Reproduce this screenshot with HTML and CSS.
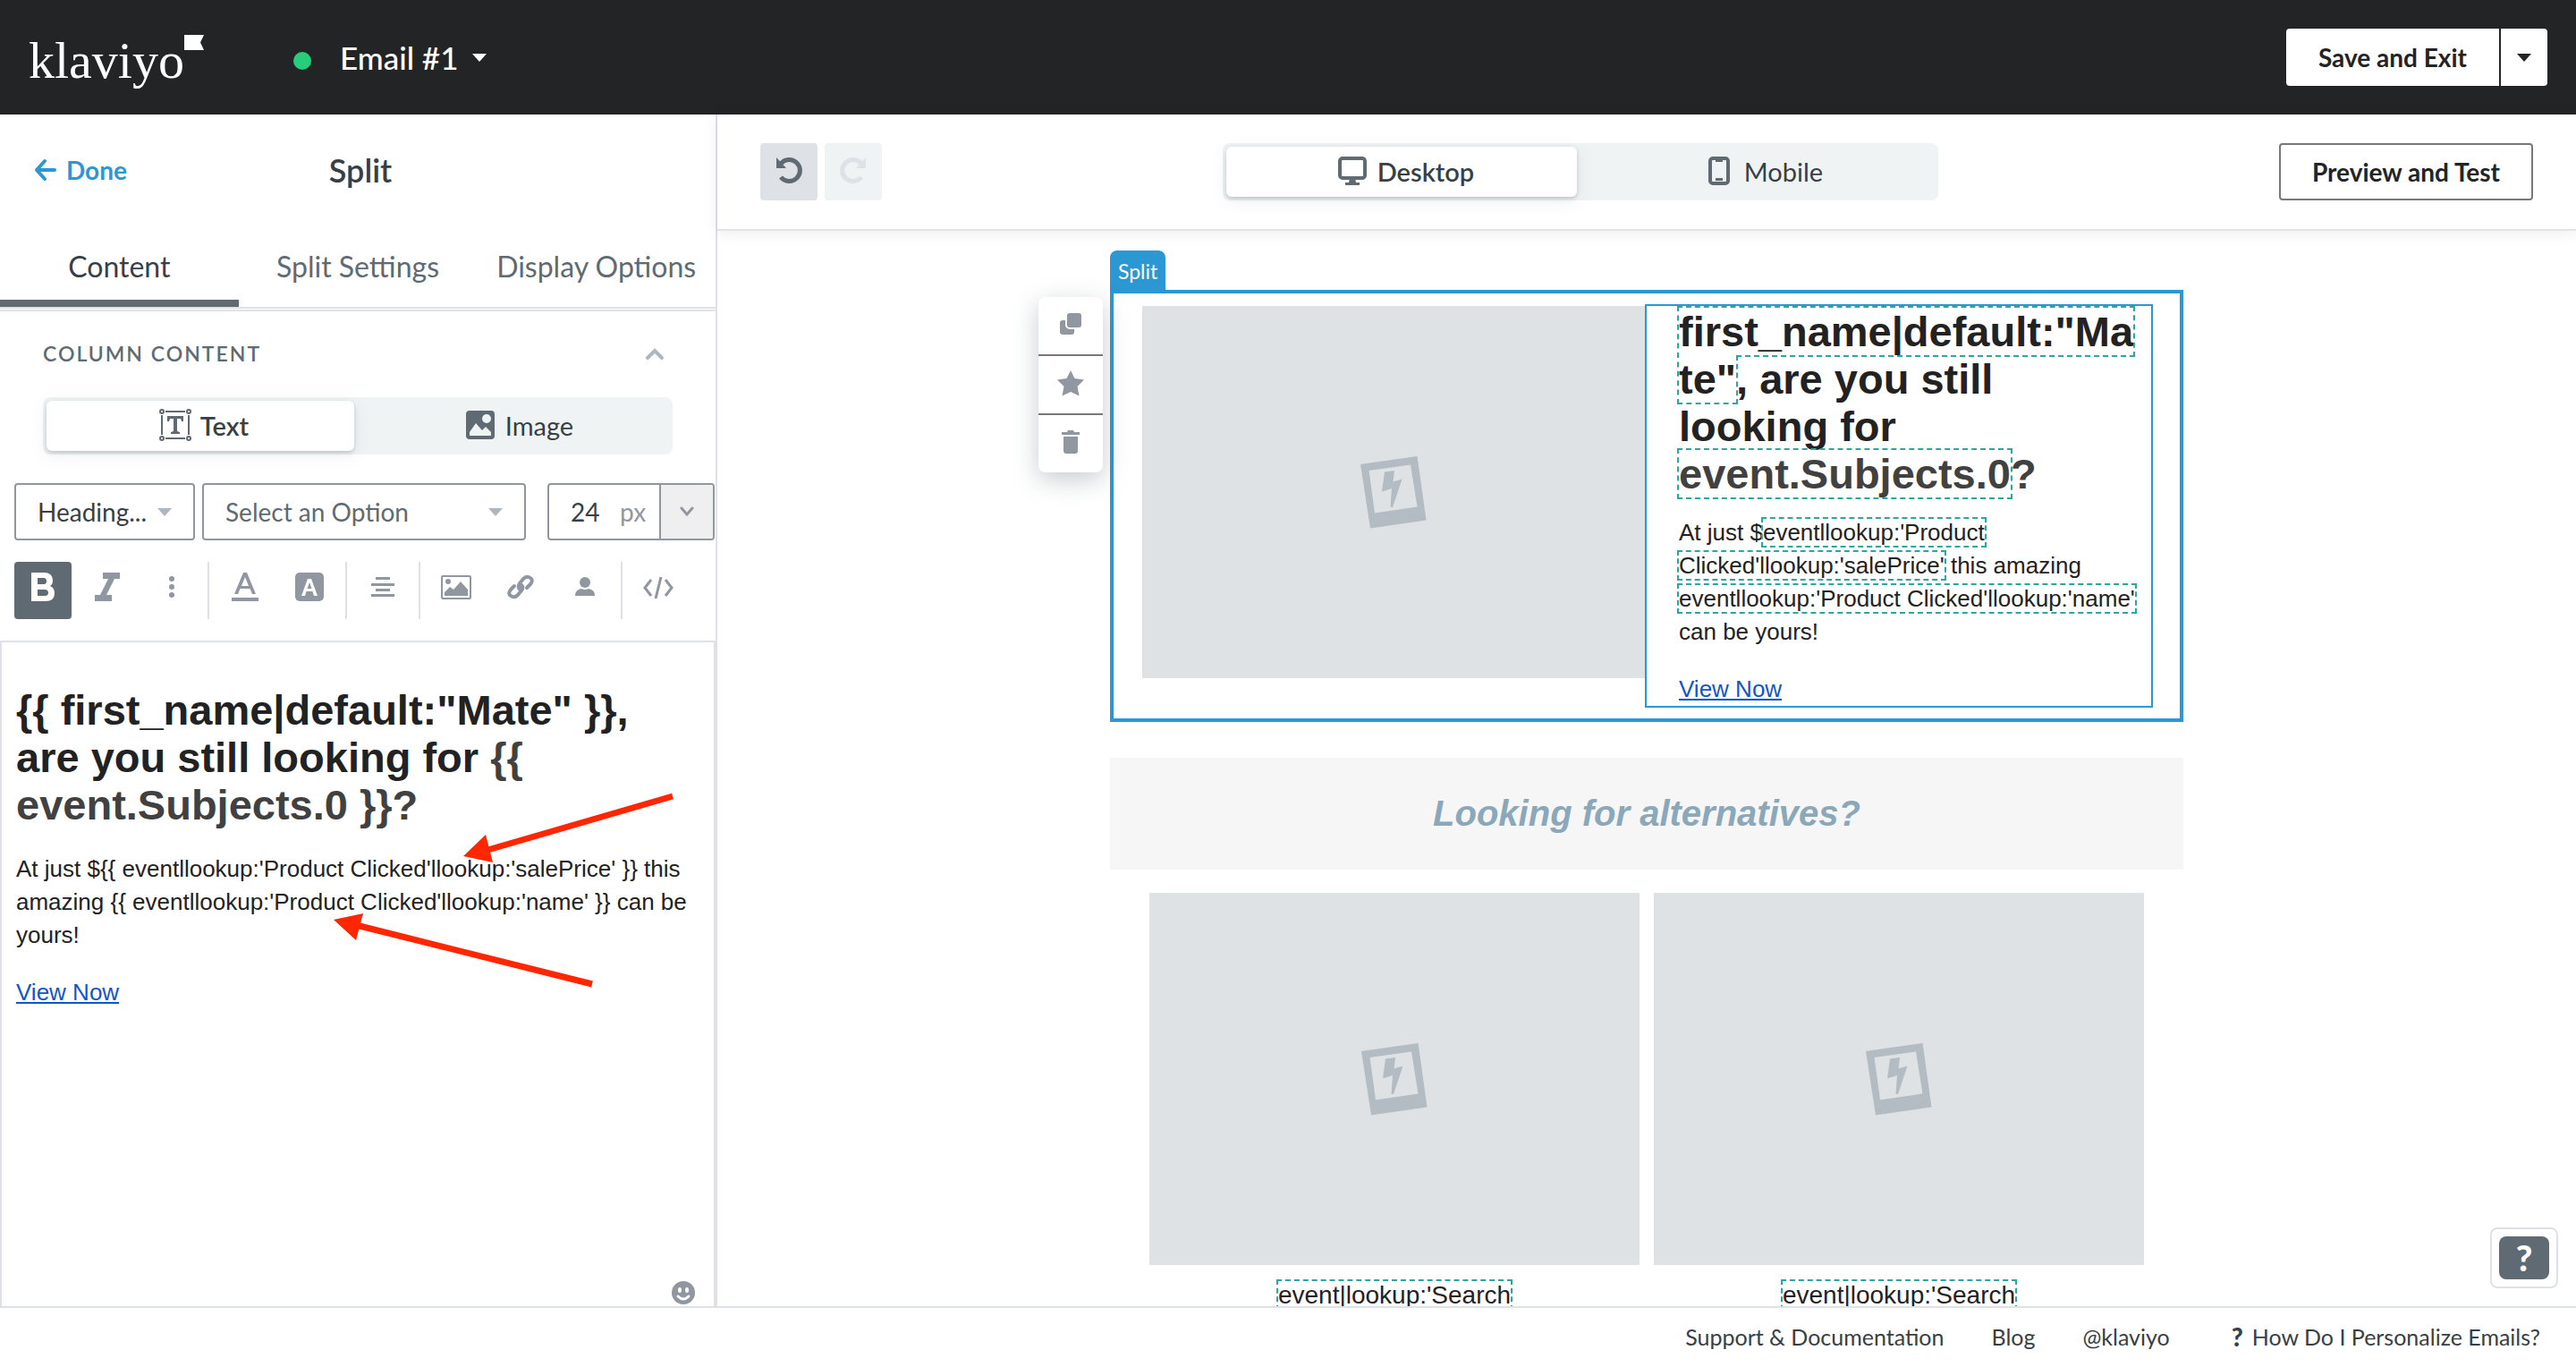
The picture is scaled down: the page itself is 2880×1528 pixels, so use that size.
FILE: index.html
```html
<!DOCTYPE html>
<html lang="en">
<head>
  <meta charset="UTF-8">
  <meta name="viewport" content="width=device-width, initial-scale=1.0">
  <title>Email #1 - Klaviyo</title>
  <link rel="stylesheet" href="styles.css">
</head>
<body>
  <!-- Shared icon used by every empty image -->
  <svg class="defs" aria-hidden="true">
    <symbol id="photo" viewBox="0 0 78 84">
      <path fill-rule="evenodd" d="M2 11 65.500 2 75.500 73.500 13 82.500ZM11.500 18 18 65.500 65.500 58.500 58 11.500Z"/>
      <path d="M29 19.500 40 18 38.500 30.500 48.500 27.500 38 59H35.500L37 38 26 41.500Z"/>
    </symbol>
  </svg>

  <header class="topbar">
    <a href="#" class="logo">klaviyo<svg width="22" height="17" viewBox="0 0 22 17"><path d="M0 0H22L18 8.500 22 17H0Z" fill="#fff"/></svg></a>
    <span class="status-dot"></span>
    <button class="email-name">Email #1 <span class="caret"></span></button>
    <div class="save-group">
      <button class="save-btn">Save and Exit</button>
      <button class="save-more" aria-label="More save options"><span class="caret"></span></button>
    </div>
  </header>

  <main class="workspace">
    <aside class="sidebar">
      <div class="sidebar-header">
        <a href="#" class="done-link">
          <svg width="26" height="26" viewBox="0 0 26 26"><path d="M12 3 3 13 12 23M4 13H23" fill="none" stroke="currentColor" stroke-width="4" stroke-linecap="round" stroke-linejoin="round"/></svg>
          Done
        </a>
        <h1>Split</h1>
      </div>

      <nav class="tabs">
        <a href="#" class="tab active">Content</a>
        <a href="#" class="tab">Split Settings</a>
        <a href="#" class="tab">Display Options</a>
      </nav>

      <section class="section">
        <div class="section-head">
          <h2>Column Content</h2>
          <button class="collapse" aria-label="Collapse">
            <svg width="24" height="16" viewBox="0 0 24 16"><path d="M4 13 12 5 20 13" fill="none" stroke="currentColor" stroke-width="4" stroke-linecap="round"/></svg>
          </button>
        </div>

        <div class="segment sidebar-segment">
          <button class="segment-btn active">
            <svg width="40" height="40" viewBox="0 0 40 40" fill="none" stroke="currentColor" stroke-width="2">
              <path d="M9 5H31M9 35H31M5 9V31M35 9V31"/>
              <circle cx="5" cy="5" r="2"/><circle cx="35" cy="5" r="2"/><circle cx="5" cy="35" r="2"/><circle cx="35" cy="35" r="2"/>
              <path d="M11 10H29V16H27L26 13H22V27L25 28V30H15V28L18 27V13H14L13 16H11Z" fill="currentColor" stroke="none"/>
            </svg>
            Text
          </button>
          <button class="segment-btn">
            <svg width="40" height="40" viewBox="0 0 40 40">
              <rect x="4" y="4" width="32" height="32" rx="4" fill="currentColor"/>
              <circle cx="27" cy="13" r="5" fill="#eff3f4"/>
              <path d="M8 32V28L15 18 22 26 26 22 32 28V32Z" fill="#eff3f4"/>
            </svg>
            Image
          </button>
        </div>

        <div class="type-row">
          <label class="select-wrap style-select">
            <select aria-label="Text style"><option>Heading...</option></select>
          </label>
          <label class="select-wrap font-select">
            <select aria-label="Font"><option>Select an Option</option></select>
          </label>
          <div class="size-field">
            <input type="text" id="fontSize" value="24" aria-label="Font size">
            <label for="fontSize">px</label>
            <button aria-label="Pick a size">
              <svg width="20" height="16" viewBox="0 0 20 16"><path d="M4 4 10 11 16 4" fill="none" stroke="currentColor" stroke-width="3" stroke-linecap="round"/></svg>
            </button>
          </div>
        </div>

        <div class="toolbar">
          <button class="tool active" aria-label="Bold">
            <svg width="40" height="40" viewBox="0 0 40 40"><path fill="#fff" fill-rule="evenodd" d="M7 4H21Q31 4 31 13Q31 17 28 19Q33 21 33 27Q33 36 23 36H7ZM14 10V17H21Q24 17 24 13.500Q24 10 21 10ZM14 23V30H22Q26 30 26 26.500Q26 23 22 23Z"/></svg>
          </button>
          <button class="tool" aria-label="Italic">
            <svg width="40" height="40" viewBox="0 0 40 40"><path d="M15 4H34V11H28L19 29H25V36H6V29H12L21 11H15Z"/></svg>
          </button>
          <button class="tool" aria-label="More">
            <svg width="40" height="40" viewBox="0 0 40 40"><circle cx="20" cy="11" r="3"/><circle cx="20" cy="20" r="3"/><circle cx="20" cy="29" r="3"/></svg>
          </button>
          <span class="divider"></span>
          <button class="tool" aria-label="Text color">
            <svg width="40" height="40" viewBox="0 0 40 40"><path fill-rule="evenodd" d="M18 4H22L32 28H28L25.500 22H14.500L12 28H8ZM20 9 16 19H24ZM5 32H35V36H5Z"/></svg>
          </button>
          <button class="tool" aria-label="Background color">
            <svg width="40" height="40" viewBox="0 0 40 40"><rect x="4" y="4" width="32" height="32" rx="5"/><path fill="#fff" fill-rule="evenodd" d="M18 11H22L29 30H25L23.500 25H16.500L15 30H11ZM20 15 17.500 22H22.500Z"/></svg>
          </button>
          <span class="divider"></span>
          <button class="tool" aria-label="Align">
            <svg width="40" height="40" viewBox="0 0 40 40"><path d="M12 9H28V12H12ZM7 16H33V19H7ZM12 22H28V25H12ZM7 28H33V31H7Z"/></svg>
          </button>
          <span class="divider"></span>
          <button class="tool" aria-label="Insert image">
            <svg width="40" height="40" viewBox="0 0 40 40"><rect x="4" y="8" width="32" height="25" rx="1" fill="none" stroke="currentColor" stroke-width="2"/><circle cx="11" cy="14" r="3"/><path d="M7 30V26L13 20 17 23 25 14 33 23V30Z"/></svg>
          </button>
          <button class="tool" aria-label="Insert link">
            <svg width="40" height="40" viewBox="0 0 40 40" fill="none" stroke="currentColor" stroke-width="4" stroke-linecap="round"><path d="M20 24Q16 20 19 16L23 11Q27 7 31 10T30 18L27 21M20 17Q24 20 21 24L17 29Q13 33 9 30T10 22L13 19"/></svg>
          </button>
          <button class="tool" aria-label="Personalize">
            <svg width="40" height="40" viewBox="0 0 40 40"><circle cx="20" cy="15" r="6"/><path d="M9 30Q9 23 16 22Q20 24 24 22Q31 23 31 30Z"/></svg>
          </button>
          <span class="divider"></span>
          <button class="tool" aria-label="Source">
            <svg width="40" height="40" viewBox="0 0 40 40" fill="none" stroke="currentColor" stroke-width="3"><path d="M12 12 5 21 12 30M28 12 35 21 28 30M23 9 17 33"/></svg>
          </button>
        </div>
      </section>

      <div class="editor">
        <div class="rich-text" contenteditable="true">
          <h3>{{ first_name|default:"Mate" }}, are you still looking for <span class="soft">{{ event.Subjects.0 }}?</span></h3>
          <p>At just ${{ eventllookup:'Product Clicked'llookup:'salePrice' }} this amazing {{ eventllookup:'Product Clicked'llookup:'name' }} can be yours!</p>
          <p><a href="#">View Now</a></p>
        </div>
        <button class="emoji" aria-label="Emoji">
          <svg width="26" height="26" viewBox="0 0 26 26"><circle cx="13" cy="13" r="13" fill="currentColor"/><ellipse cx="9" cy="10" rx="2" ry="3" fill="#fff"/><ellipse cx="17" cy="10" rx="2" ry="3" fill="#fff"/><path d="M7 17Q13 23 19 17" fill="none" stroke="#fff" stroke-width="3" stroke-linecap="round"/></svg>
        </button>
        <!-- Red arrows drawn over the text -->
        <svg class="arrows" width="800" height="420" viewBox="0 0 800 420">
          <path d="M750 172 540 233M660 382 396 316" stroke="#ff2600" stroke-width="7" fill="none"/>
          <path d="M516 239 541 215 549 246ZM371 310 404 303 396 333Z" fill="#ff2600"/>
        </svg>
      </div>
    </aside>

    <section class="canvas">
      <div class="canvas-bar">
        <div class="history">
          <button class="undo" aria-label="Undo">
            <svg width="32" height="32" viewBox="0 0 32 32"><path d="M7 9A12 12 0 1 1 7 24" fill="none" stroke="currentColor" stroke-width="5"/><path d="M2 2 13 14H2Z" fill="currentColor"/></svg>
          </button>
          <button class="redo" aria-label="Redo" disabled>
            <svg width="32" height="32" viewBox="0 0 32 32"><path d="M25 9A12 12 0 1 0 25 24" fill="none" stroke="currentColor" stroke-width="5"/><path d="M30 2 19 14H30Z" fill="currentColor"/></svg>
          </button>
        </div>
        <div class="segment device-segment">
          <button class="segment-btn active">
            <svg width="40" height="40" viewBox="0 0 40 40"><rect x="6" y="6" width="28" height="22" rx="3" fill="none" stroke="currentColor" stroke-width="4"/><path d="M17 28H23L24 33H28V36H12V33H16Z" fill="currentColor"/></svg>
            Desktop
          </button>
          <button class="segment-btn">
            <svg width="40" height="40" viewBox="0 0 40 40"><rect x="10" y="6" width="20" height="28" rx="3" fill="none" stroke="currentColor" stroke-width="4"/><path d="M16 6H24V10H16ZM16 28H24V31H16Z" fill="currentColor"/></svg>
            Mobile
          </button>
        </div>
        <button class="preview-btn">Preview and Test</button>
      </div>

      <div class="stage">
        <div class="email">
          <div class="block split-block">
            <span class="block-tag">Split</span>
            <div class="block-tools">
              <button aria-label="Duplicate">
                <svg width="32" height="32" viewBox="0 0 32 32"><rect x="4" y="12" width="16" height="16" rx="3" fill="currentColor"/><rect x="11" y="3" width="18" height="18" rx="4" fill="currentColor" stroke="#fff" stroke-width="2"/></svg>
              </button>
              <button aria-label="Favorite">
                <svg width="32" height="32" viewBox="0 0 32 32"><path d="M16 2 20.500 11 31 12.500 23.500 20 25.500 30.500 16 26 6.500 30.500 8.500 20 1 12.500 11.500 11Z" fill="currentColor"/></svg>
              </button>
              <button aria-label="Delete">
                <svg width="32" height="32" viewBox="0 0 32 32"><path d="M6 5H12L13 3H19L20 5H26V8H6ZM8 10H24V26Q24 29 21 29H11Q8 29 8 26Z" fill="currentColor"/></svg>
              </button>
            </div>
            <div class="image-slot"><svg width="78" height="84"><use href="#photo"/></svg></div>
            <div class="split-text">
              <h3><span class="token">first_name|default:"Mate"</span>, are you still looking for <span class="soft"><span class="token">event.Subjects.0</span>?</span></h3>
              <p>At just $<span class="token">eventllookup:'Product Clicked'llookup:'salePrice'</span> this amazing <span class="token">eventllookup:'Product Clicked'llookup:'name'</span> can be yours!</p>
              <p><a href="#">View Now</a></p>
            </div>
          </div>

          <h2 class="banner">Looking for alternatives?</h2>

          <div class="products">
            <div class="product">
              <div class="image-slot"><svg width="78" height="84"><use href="#photo"/></svg></div>
              <p><span class="token">event|lookup:'Search</span></p>
            </div>
            <div class="product">
              <div class="image-slot"><svg width="78" height="84"><use href="#photo"/></svg></div>
              <p><span class="token">event|lookup:'Search</span></p>
            </div>
          </div>
        </div>
      </div>

      <button class="help" aria-label="Help"><span>?</span></button>
    </section>
  </main>

  <footer class="footer">
    <a href="#">Support &amp; Documentation</a>
    <a href="#">Blog</a>
    <a href="#">@klaviyo</a>
    <a href="#" class="footer-help"><b>?</b> How Do I Personalize Emails?</a>
  </footer>
</body>
</html>
```
FILE: styles.css
```css
* {
  box-sizing: border-box;
}
body {
  margin: 0;
  height: 100vh;
  display: flex;
  flex-direction: column;
  overflow: hidden;
  background-color: #fff;
  color: #373f47;
  font-family: Lato, "Open Sans", sans-serif;
  font-size: 28px;
}
h1, h2, h3, p {
  margin: 0;
}
button, select, input {
  font: inherit;
  color: inherit;
  border: none;
  padding: 0;
  background: none;
}
button {
  display: flex;
  align-items: center;
  justify-content: center;
  cursor: pointer;
}
a {
  color: inherit;
  text-decoration: none;
}
svg {
  flex-shrink: 0;
}
.defs {
  position: absolute;
  width: 0;
  height: 0;
}
.caret {
  border: 8px solid transparent;
  border-top: 9px solid currentColor;
  border-bottom: 0;
}

/* Top bar */
.topbar {
  height: 128px;
  flex-shrink: 0;
  display: flex;
  align-items: center;
  padding: 0 32px;
  background-color: #232426;
  color: #fff;
}
.logo {
  display: flex;
  align-items: flex-start;
  margin-top: 8px;
  font-family: "Liberation Serif", serif;
  font-size: 58px;
  line-height: 58px;
}
.status-dot {
  width: 20px;
  height: 20px;
  margin: 8px 32px 0 100px;
  border-radius: 50%;
  background-color: #24ce7b;
}
.email-name {
  gap: 16px;
  font-size: 35px;
  font-weight: 500;
}
.save-group {
  margin-left: auto;
  display: flex;
  gap: 2px;
}
.save-btn, .save-more {
  height: 64px;
  background-color: #fff;
  color: #232426;
  font-weight: 700;
}
.save-btn {
  padding: 0 36px;
  border-radius: 4px 0 0 4px;
}
.save-more {
  width: 52px;
  border-radius: 0 4px 4px 0;
}

/* Sidebar */
.workspace {
  flex: 1;
  min-height: 0;
  display: flex;
}
.sidebar {
  width: 802px;
  flex-shrink: 0;
  display: flex;
  flex-direction: column;
  border-right: 2px solid #dee2e6;
}
.sidebar-header {
  height: 128px;
  display: grid;
  grid-template-columns: 1fr auto 1fr;
  align-items: center;
  padding: 0 32px 4px 38px;
}
.sidebar-header h1 {
  font-size: 36px;
  font-weight: 600;
}
.done-link {
  display: flex;
  align-items: center;
  gap: 10px;
  color: #2b97d3;
  font-weight: 700;
}
.tabs {
  display: grid;
  grid-template-columns: repeat(3, 1fr);
  border-bottom: 2px solid #dee2e6;
}
.tab {
  height: 87px;
  padding-top: 4px;
  display: flex;
  align-items: center;
  justify-content: center;
  border-bottom: 8px solid transparent;
  color: #606a72;
  font-size: 32px;
}
.tab.active {
  border-bottom-color: #606a72;
  color: #373f47;
}
.section {
  margin-top: 1px;
  border-top: 2px solid #dee2e6;
}
.section-head {
  height: 96px;
  padding: 0 48px 2px;
  display: flex;
  align-items: center;
  justify-content: space-between;
}
.section-head h2 {
  color: #606a72;
  font-size: 23px;
  font-weight: 600;
  letter-spacing: 2px;
  text-transform: uppercase;
}
.collapse {
  width: 40px;
  height: 40px;
  color: #aeb6be;
}
.segment {
  height: 64px;
  padding: 4px;
  display: grid;
  grid-template-columns: 1fr 1fr;
  gap: 8px;
  border-radius: 8px;
  background-color: #eff3f4;
}
.sidebar-segment {
  margin: 0 48px;
}
.segment-btn {
  gap: 8px;
  padding: 0 0 2px 6px;
  border-radius: 6px;
  font-size: 29px;
}
.segment-btn svg {
  color: #606a72;
}
.segment-btn.active {
  background-color: #fff;
  font-weight: 600;
  box-shadow: 0 2px 4px rgba(96, 106, 114, 0.3), 0 4px 20px rgba(96, 106, 114, 0.1);
}
.type-row {
  display: flex;
  gap: 8px;
  padding: 32px 1px 24px 16px;
}
.select-wrap {
  position: relative;
}
.select-wrap::after {
  content: "";
  position: absolute;
  top: 28px;
  right: 26px;
  border: 8px solid transparent;
  border-top: 9px solid #aeb6be;
  border-bottom: 0;
  pointer-events: none;
}
.select-wrap select, .size-field {
  width: 100%;
  height: 64px;
  border: 2px solid #9097a0;
  border-radius: 4px;
}
.select-wrap select {
  padding-left: 24px;
  appearance: none;
}
.style-select {
  width: 202px;
}
.font-select {
  flex: 1;
  color: #606a72;
}
.size-field {
  width: 187px;
  margin-left: 16px;
  display: flex;
  align-items: center;
  overflow: hidden;
}
.size-field input {
  width: 79px;
  padding-left: 24px;
}
.size-field label {
  flex: 1;
  color: #9097a0;
}
.size-field button {
  width: 60px;
  height: 60px;
  border-left: 2px solid #9097a0;
  background-color: #efefef;
  color: #9097a0;
}
.toolbar {
  display: flex;
  gap: 8px;
  padding: 0 16px 24px;
}
.tool {
  width: 64px;
  height: 64px;
  padding-bottom: 8px;
  border-radius: 4px;
  color: #9097a0;
}
.tool svg {
  fill: currentColor;
}
.tool svg[fill="none"] {
  fill: none;
}
.tool.active {
  background-color: #606a72;
}
.divider {
  width: 2px;
  height: 64px;
  background-color: #dee2e6;
}
.editor {
  position: relative;
  flex: 1;
  border: 2px solid #dee2e6;
  border-bottom: none;
}
.rich-text {
  padding: 49px 16px;
}
.arrows {
  position: absolute;
  top: 0;
  left: 0;
  pointer-events: none;
}
.emoji {
  position: absolute;
  right: 21px;
  bottom: 2px;
  color: #9097a0;
}

/* Email copy, shared by the editor and the preview */
.rich-text, .email {
  color: #222;
  font-family: "Liberation Sans", Arial, sans-serif;
  font-size: 26px;
  line-height: 37px;
}
.rich-text h3, .email h3 {
  font-size: 47px;
  line-height: 53px;
}
.rich-text h3 {
  margin-bottom: 27px;
}
.email h3 {
  margin-bottom: 21px;
}
.rich-text p + p, .email p + p {
  margin-top: 27px;
}
.rich-text a, .email a {
  color: #15c;
  text-decoration: underline;
}
.soft {
  color: #414141;
}
.token {
  outline: 2px dashed #2ba6a3;
}

/* Canvas */
.canvas {
  position: relative;
  flex: 1;
  min-width: 0;
  display: flex;
  flex-direction: column;
}
.canvas-bar {
  height: 130px;
  flex-shrink: 0;
  display: flex;
  align-items: center;
  justify-content: space-between;
  padding: 0 48px;
  border-bottom: 2px solid #e1e5e6;
  box-shadow: 0 2px 16px rgba(0, 0, 0, 0.08);
}
.history {
  display: flex;
  gap: 8px;
}
.history button {
  width: 64px;
  height: 64px;
  padding-bottom: 4px;
  border-radius: 4px;
}
.undo {
  background-color: #dee2e6;
  color: #606a72;
}
.redo {
  background-color: #eff3f4;
  color: #dee2e6;
}
.device-segment {
  width: 800px;
}
.preview-btn {
  height: 64px;
  padding: 0 35px;
  border: 2px solid #77787a;
  border-radius: 4px;
  color: #232426;
  font-weight: 700;
}
.stage {
  flex: 1;
  min-height: 0;
  overflow: hidden;
  padding-top: 66px;
}
.email {
  width: 1200px;
  margin: 0 auto;
}
.split-block {
  position: relative;
  display: flex;
  align-items: flex-start;
  padding: 12px 30px 12px 32px;
  border: 4px solid #2b97d3;
}
.block-tag {
  position: absolute;
  left: -4px;
  bottom: 100%;
  height: 48px;
  padding: 0 9px;
  border-radius: 8px 8px 0 0;
  background-color: #2b97d3;
  color: #fff;
  font: 23px/46px Lato, "Open Sans", sans-serif;
}
.block-tools {
  position: absolute;
  top: 4px;
  right: 100%;
  margin-right: 12px;
  border-radius: 8px;
  background-color: #fff;
  box-shadow: 0 8px 28px rgba(96, 106, 114, 0.35);
}
.block-tools button {
  width: 72px;
  height: 64px;
  padding-bottom: 4px;
  color: #9097a0;
}
.block-tools button + button {
  height: 66px;
  border-top: 2px solid #77787a;
}
.image-slot {
  height: 416px;
  display: flex;
  align-items: center;
  justify-content: center;
  background-color: #dee2e5;
  fill: #b3bbc3;
}
.split-block .image-slot {
  flex: 1;
  margin-top: 2px;
}
.split-text {
  width: 568px;
  padding: 2px 8px 0 36px;
  border: 2px solid #2b97d3;
  word-break: break-word;
}
.banner {
  margin-top: 40px;
  padding: 36px 0;
  background-color: #f6f6f6;
  color: #8aa8b9;
  font-size: 40px;
  font-style: italic;
  line-height: 53px;
  text-align: center;
}
.products {
  display: grid;
  grid-template-columns: 1fr 1fr;
  gap: 16px;
  padding: 26px 44px;
}
.product p {
  margin-top: 14px;
  font-size: 28px;
  line-height: 40px;
  text-align: center;
}
.help {
  position: absolute;
  right: 20px;
  bottom: 20px;
  padding: 8px;
  border: 2px solid #dee2e6;
  border-radius: 8px;
  background-color: #fff;
}
.help span {
  width: 56px;
  border-radius: 8px;
  background-color: #606a72;
  color: #fff;
  font-size: 40px;
  font-weight: 900;
  line-height: 48px;
}

/* Footer */
.footer {
  height: 68px;
  flex-shrink: 0;
  display: flex;
  align-items: center;
  justify-content: flex-end;
  gap: 53px;
  padding: 0 40px 2px;
  border-top: 2px solid #dee2e6;
  font-size: 25px;
}
.footer-help {
  display: flex;
  align-items: center;
  gap: 10px;
  margin-left: 16px;
}
.footer-help b {
  font-size: 28px;
  font-weight: 900;
}
```
